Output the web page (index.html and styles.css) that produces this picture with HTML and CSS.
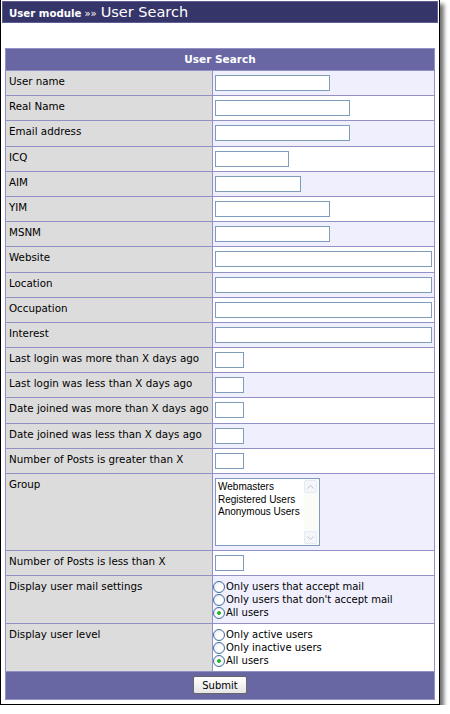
FILE: index.html
```html
<!DOCTYPE html>
<html lang="en">
<head>
<meta charset="utf-8">
<title>User module - User Search</title>
<link rel="stylesheet" href="styles.css">
</head>
<body>
<div class="frame">
  <div class="titlebar"><span class="module">User module</span><span class="sep">&raquo;&raquo;</span><span class="page">User Search</span></div>
  <form class="search-form">
    <table class="grid">
      <colgroup><col class="col-label"><col class="col-value"></colgroup>
      <tr><th colspan="2" class="head">User Search</th></tr>
      <tr class="odd"><td class="label">User name</td><td class="value"><input class="txt w114" type="text"></td></tr>
      <tr class="even"><td class="label">Real Name</td><td class="value"><input class="txt w134" type="text"></td></tr>
      <tr class="odd"><td class="label">Email address</td><td class="value"><input class="txt w134" type="text"></td></tr>
      <tr class="even"><td class="label">ICQ</td><td class="value"><input class="txt w73" type="text"></td></tr>
      <tr class="odd"><td class="label">AIM</td><td class="value"><input class="txt w85" type="text"></td></tr>
      <tr class="even"><td class="label">YIM</td><td class="value"><input class="txt w114" type="text"></td></tr>
      <tr class="odd"><td class="label">MSNM</td><td class="value"><input class="txt w114" type="text"></td></tr>
      <tr class="even"><td class="label">Website</td><td class="value"><input class="txt wfull" type="text"></td></tr>
      <tr class="odd"><td class="label">Location</td><td class="value"><input class="txt wfull" type="text"></td></tr>
      <tr class="even"><td class="label">Occupation</td><td class="value"><input class="txt wfull" type="text"></td></tr>
      <tr class="odd"><td class="label">Interest</td><td class="value"><input class="txt wfull" type="text"></td></tr>
      <tr class="even"><td class="label">Last login was more than X days ago</td><td class="value"><input class="txt w28" type="text"></td></tr>
      <tr class="odd"><td class="label">Last login was less than X days ago</td><td class="value"><input class="txt w28" type="text"></td></tr>
      <tr class="even"><td class="label">Date joined was more than X days ago</td><td class="value"><input class="txt w28" type="text"></td></tr>
      <tr class="odd"><td class="label">Date joined was less than X days ago</td><td class="value"><input class="txt w28" type="text"></td></tr>
      <tr class="even"><td class="label">Number of Posts is greater than X</td><td class="value"><input class="txt w28" type="text"></td></tr>
      <tr class="odd"><td class="label">Group</td><td class="value">
        <div class="listbox">
          <ul class="options">
            <li>Webmasters</li>
            <li>Registered Users</li>
            <li>Anonymous Users</li>
          </ul>
          <div class="scrollbar">
            <span class="arrow"><svg width="7" height="4" viewBox="0 0 7 4"><path d="M0.5 3.5 L3.5 0.5 L6.5 3.5" fill="none" stroke="#b9c3d3" stroke-width="1"/></svg></span>
            <span class="arrow"><svg width="7" height="4" viewBox="0 0 7 4"><path d="M0.5 0.5 L3.5 3.5 L6.5 0.5" fill="none" stroke="#b9c3d3" stroke-width="1"/></svg></span>
          </div>
        </div>
      </td></tr>
      <tr class="even"><td class="label">Number of Posts is less than X</td><td class="value"><input class="txt w28" type="text"></td></tr>
      <tr class="odd"><td class="label">Display user mail settings</td><td class="value">
        <label class="radio"><input type="radio" name="mail"><span>Only users that accept mail</span></label>
        <label class="radio"><input type="radio" name="mail"><span>Only users that don't accept mail</span></label>
        <label class="radio"><input type="radio" name="mail" checked><span>All users</span></label>
      </td></tr>
      <tr class="even"><td class="label">Display user level</td><td class="value">
        <label class="radio"><input type="radio" name="level"><span>Only active users</span></label>
        <label class="radio"><input type="radio" name="level"><span>Only inactive users</span></label>
        <label class="radio"><input type="radio" name="level" checked><span>All users</span></label>
      </td></tr>
      <tr><td colspan="2" class="foot"><button type="button" class="submit">Submit</button></td></tr>
    </table>
  </form>
</div>
</body>
</html>
```
FILE: styles.css
```css
html, body {
  margin: 0;
  padding: 0;
  background: #ffffff;
}

.frame {
  box-sizing: border-box;
  width: 440px;
  height: 705px;
  border-left: 1px solid #000;
  border-right: 1px solid #000;
  border-bottom: 1px solid #000;
  padding: 1px 0 0 1px;
  box-shadow: 4px 4px 4px rgba(0, 0, 0, 0.55);
  background: #fff;
}

.titlebar {
  box-sizing: border-box;
  display: flex;
  align-items: baseline;
  width: 436px;
  height: 22px;
  background: #36356a;
  border: 1px solid #5e5d95;
  color: #fff;
  font-family: "DejaVu Sans", Verdana, sans-serif;
  padding: 2px 0 0 6px;
  white-space: nowrap;
}

.titlebar .module {
  font-size: 10.2px;
  font-weight: bold;
}

.titlebar .sep {
  font-size: 10px;
  margin: 0 4px 0 3px;
}

.titlebar .page {
  font-size: 14.5px;
}

.search-form {
  margin: 25px 0 0 3px;
}

.grid {
  table-layout: fixed;
  width: 430px;
  border-collapse: separate;
  border-spacing: 1px;
  background: #9291c5;
  font-family: "DejaVu Sans", Verdana, sans-serif;
  font-size: 10.3px;
  color: #000;
}

.col-label { width: 206px; }
.col-value { width: 221px; }

.grid td {
  box-sizing: border-box;
  height: 24.2px;
  padding: 4px 2px;
  vertical-align: top;
  line-height: 16px;
}

.grid .head {
  height: 21px;
  background: #6867a3;
  color: #fff;
  font-weight: bold;
  font-size: 10.5px;
  text-align: center;
  line-height: 21px;
  padding: 0;
}

.grid .label {
  background: #dcdcdc;
  padding: 3px 0 0 3px;
  line-height: 15px;
  white-space: nowrap;
  overflow: hidden;
}

.grid .value {
  padding-left: 2px;
}

.odd .value {
  background: #efeffd;
}

.even .value {
  background: #ffffff;
}

.txt {
  box-sizing: border-box;
  display: block;
  height: 16px;
  margin: 0;
  padding: 0 2px;
  border: 1px solid #7f9db9;
  background: #fff;
  font-family: "DejaVu Sans", Verdana, sans-serif;
  font-size: 11px;
}

.w114 { width: 115px; }
.w134 { width: 135px; }
.w73 { width: 74px; }
.w85 { width: 86px; }
.w28 { width: 29px; }
.wfull { width: 217px; }

.listbox {
  box-sizing: border-box;
  display: flex;
  width: 105px;
  height: 68px;
  border: 1px solid #7f9db9;
  background: #fff;
}

.options {
  flex: 1;
  margin: 0;
  padding: 2px 0 0 2px;
  list-style: none;
  font-family: "Liberation Sans", Arial, sans-serif;
  font-size: 10px;
  line-height: 12.5px;
  white-space: nowrap;
}

.scrollbar {
  width: 14px;
  display: flex;
  flex-direction: column;
  justify-content: space-between;
  padding: 1px 1px 1px 0;
  background: #fbfbf8;
}

.arrow {
  box-sizing: border-box;
  display: flex;
  align-items: center;
  justify-content: center;
  width: 13px;
  height: 13px;
  border: 1px solid #e6ebf3;
  border-radius: 2px;
  background: #f4f6f9;
}

.radio {
  display: flex;
  align-items: center;
  height: 13px;
  line-height: 13px;
  margin-left: -2px;
  font-size: 10px;
}

.radio input {
  appearance: none;
  -webkit-appearance: none;
  box-sizing: border-box;
  width: 12px;
  height: 12px;
  margin: 0 1px 0 0;
  border: 1px solid #3f6da0;
  border-radius: 50%;
  background: radial-gradient(circle at 60% 60%, #fff 30%, #dfe4ec 100%);
}

.radio input:checked {
  background: radial-gradient(circle, #2fb52f 0, #2fb52f 1.6px, #fff 2.2px, #e6ebf0 100%);
}

.grid .foot {
  height: 27px;
  background: #6867a3;
  text-align: center;
  padding: 4px 0 0 0;
  vertical-align: top;
}

.submit {
  box-sizing: border-box;
  width: 54px;
  height: 18px;
  margin: 0;
  padding: 0;
  border: 1px solid #666;
  border-radius: 2px;
  background: linear-gradient(#ffffff, #e6e6e6);
  font-family: "DejaVu Sans", Verdana, sans-serif;
  font-size: 10px;
  color: #000;
}
```
